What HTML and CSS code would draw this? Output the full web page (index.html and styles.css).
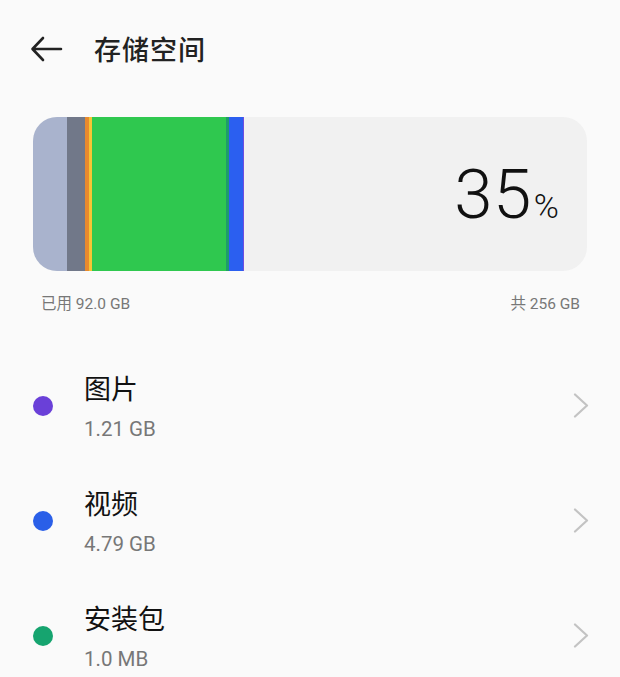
FILE: index.html
```html
<!DOCTYPE html>
<html lang="zh-CN">
<head>
<meta charset="utf-8">
<title>存储空间</title>
<link rel="stylesheet" href="styles.css">
</head>
<body>
<div class="page">
  <header class="header">
    <svg class="back" width="34" height="30" viewBox="0 0 34 30">
      <path d="M31 15 H3 M13 4 L2.5 15 L13 26" fill="none" stroke="#222" stroke-width="2.6" stroke-linecap="round" stroke-linejoin="round"/>
    </svg>
    <h1 class="title">存储空间</h1>
  </header>

  <section class="card">
    <div class="bar">
      <span class="seg seg-sys" style="width:34px"></span>
      <span class="seg seg-other" style="width:18px"></span>
      <span class="seg seg-orange" style="width:4px"></span>
      <span class="seg seg-yellow" style="width:3px"></span>
      <span class="seg seg-green" style="width:134px"></span>
      <span class="seg seg-teal" style="width:3px"></span>
      <span class="seg seg-blue" style="width:14px"></span>
      <span class="seg seg-purple" style="width:1px"></span>
    </div>
    <div class="percent"><span class="num">35</span><span class="pct">%</span></div>
  </section>

  <div class="labels">
    <span>已用 92.0 GB</span>
    <span>共 256 GB</span>
  </div>

  <ul class="list">
    <li class="row">
      <span class="dot dot-purple"></span>
      <div class="text">
        <div class="name">图片</div>
        <div class="size">1.21 GB</div>
      </div>
      <svg class="chev" width="16" height="25" viewBox="0 0 16 25"><path d="M2 1.5 L14 12.5 L2 23.5" fill="none" stroke="#c3c3c3" stroke-width="2.2" stroke-linecap="round" stroke-linejoin="round"/></svg>
    </li>
    <li class="row">
      <span class="dot dot-blue"></span>
      <div class="text">
        <div class="name">视频</div>
        <div class="size">4.79 GB</div>
      </div>
      <svg class="chev" width="16" height="25" viewBox="0 0 16 25"><path d="M2 1.5 L14 12.5 L2 23.5" fill="none" stroke="#c3c3c3" stroke-width="2.2" stroke-linecap="round" stroke-linejoin="round"/></svg>
    </li>
    <li class="row">
      <span class="dot dot-green"></span>
      <div class="text">
        <div class="name">安装包</div>
        <div class="size">1.0 MB</div>
      </div>
      <svg class="chev" width="16" height="25" viewBox="0 0 16 25"><path d="M2 1.5 L14 12.5 L2 23.5" fill="none" stroke="#c3c3c3" stroke-width="2.2" stroke-linecap="round" stroke-linejoin="round"/></svg>
    </li>
  </ul>
</div>
</body>
</html>
```

FILE: styles.css
```css
html, body {
  margin: 0;
  padding: 0;
  background: #fafafa;
}
body {
  font-family: Roboto, "Noto Sans CJK SC", sans-serif;
  color: #1a1a1a;
  overflow: hidden;
}
.page {
  width: 620px;
  height: 677px;
  overflow: hidden;
}
.header {
  height: 98px;
  display: flex;
  align-items: center;
  padding-left: 30px;
}
.back {
  display: block;
  flex: none;
}
.title {
  margin: 0 0 0 30px;
  font-family: "Noto Sans CJK SC", sans-serif;
  font-size: 27px;
  font-weight: 500;
  color: #222;
  line-height: 36px;
  letter-spacing: 1px;
}
.card {
  margin: 19px 33px 0;
  height: 154px;
  border-radius: 24px;
  background: #f1f1f1;
  overflow: hidden;
  display: flex;
  align-items: stretch;
}
.bar {
  display: flex;
  flex: none;
}
.seg {
  display: block;
  height: 100%;
}
.seg-sys { background: #a9b3cd; }
.seg-other { background: #717889; }
.seg-orange { background: #e88a2e; }
.seg-yellow { background: #f6c535; }
.seg-green { background: #2fc84f; }
.seg-teal { background: #1f9c6a; }
.seg-blue { background: #2b5ff0; }
.seg-purple { background: #6d4ee0; }
.percent {
  flex: 1;
  display: flex;
  justify-content: flex-end;
  align-items: baseline;
  padding-right: 28px;
  padding-top: 38px;
  color: #111;
}
.num {
  font-size: 69px;
  font-weight: 300;
  line-height: 80px;
  letter-spacing: 0.5px;
}
.pct {
  font-size: 34px;
  font-weight: 300;
  margin-left: 2px;
}
.labels {
  margin-top: 23px;
  padding: 0 40px 0 41px;
  display: flex;
  justify-content: space-between;
  font-size: 15.5px;
  line-height: 20px;
  color: #777;
}
.list {
  list-style: none;
  margin: 34px 0 0;
  padding: 0;
}
.row {
  height: 115px;
  display: flex;
  align-items: center;
  padding: 0 31px 0 33px;
}
.dot {
  width: 20px;
  height: 20px;
  border-radius: 50%;
  flex: none;
}
.dot-purple { background: #6a40d8; }
.dot-blue { background: #2a5fe8; }
.dot-green { background: #16a46f; }
.text {
  flex: 1;
  margin-left: 31px;
  display: flex;
  flex-direction: column;
  gap: 10px;
  margin-top: 2px;
}
.name {
  font-family: "Noto Sans CJK SC", sans-serif;
  font-size: 27px;
  line-height: 34px;
  color: #111;
}
.size {
  font-size: 20.5px;
  line-height: 28px;
  color: #777;
}
.chev {
  display: block;
  flex: none;
}
```
